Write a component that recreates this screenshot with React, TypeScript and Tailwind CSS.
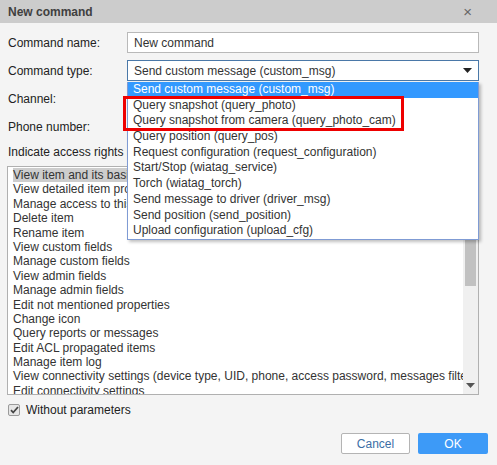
import React from "react";

const rights = [
  "View item and its basic properties",
  "View detailed item properties",
  "Manage access to this item",
  "Delete item",
  "Rename item",
  "View custom fields",
  "Manage custom fields",
  "View admin fields",
  "Manage admin fields",
  "Edit not mentioned properties",
  "Change icon",
  "Query reports or messages",
  "Edit ACL propagated items",
  "Manage item log",
  "View connectivity settings (device type, UID, phone, access password, messages filter)",
  "Edit connectivity settings",
];

const options = [
  "Send custom message (custom_msg)",
  "Query snapshot (query_photo)",
  "Query snapshot from camera (query_photo_cam)",
  "Query position (query_pos)",
  "Request configuration (request_configuration)",
  "Start/Stop (wiatag_service)",
  "Torch (wiatag_torch)",
  "Send message to driver (driver_msg)",
  "Send position (send_position)",
  "Upload configuration (upload_cfg)",
];

export default function App() {
  return (
    <div
      className="relative w-[497px] h-[465px] bg-[#f4f4f4] text-[12px] text-[#333] overflow-hidden"
      style={{ fontFamily: '"Liberation Sans", Arial, sans-serif' }}
    >
      {/* header */}
      <div className="h-[23px] bg-[#cccccc] flex items-center justify-between pl-[8px] pr-[25px]">
        <span className="font-bold text-[#404040]">New command</span>
        <span className="text-[#666] text-[15px] leading-none">×</span>
      </div>

      <div className="flex flex-col px-[7px] pt-[9px]">
        <div className="flex items-center h-[21px]">
          <div className="w-[120px] pl-[1px] text-[#222]">Command name:</div>
          <div className="w-[352px] h-[21px] border border-[#b9b9b9] bg-white pl-[6px] flex items-center">
            New command
          </div>
        </div>
        <div className="flex items-center h-[21px] mt-[7px]">
          <div className="w-[120px] pl-[1px] text-[#222]">Command type:</div>
          <div className="w-[352px] h-[21px] border border-[#4a78a8] bg-white pl-[6px] pr-[6px] flex items-center justify-between">
            <span>Send custom message (custom_msg)</span>
            <svg width="9" height="5" viewBox="0 0 9 5">
              <path d="M0 0h9L4.5 5z" fill="#222" />
            </svg>
          </div>
        </div>
        <div className="flex items-center h-[21px] mt-[7px] pl-[1px] text-[#222]">Channel:</div>
        <div className="flex items-center h-[21px] mt-[7px] pl-[1px] text-[#222]">Phone number:</div>
        <div className="flex items-center h-[16px] mt-[7px] pl-[1px] text-[#222]">
          Indicate access rights required to execute the command
        </div>

        {/* list */}
        <div className="mt-[6px] w-[472px] h-[229px] border border-[#b0b0b0] bg-white flex">
          <div className="flex-1 overflow-hidden pl-[5px] pt-[1px]">
            {rights.map((r, i) => (
              <div
                key={r}
                className={`h-[14.4px] leading-[14.4px] whitespace-nowrap ${i === 0 ? "bg-[#cdcdcd]" : ""}`}
              >
                {r}
              </div>
            ))}
          </div>
          <div className="w-[15px] bg-[#f0f0f0] flex flex-col items-center">
            <div className="h-[14px]" />
            <div className="w-[11px] h-[103px] bg-[#c1c1c1] mt-[2px]" />
            <div className="flex-1" />
            <svg width="9" height="5" viewBox="0 0 9 5" className="mb-[6px]">
              <path d="M0 0h9L4.5 5z" fill="#555" />
            </svg>
          </div>
        </div>

        <div className="flex items-center mt-[9px] h-[12px]">
          <div className="w-[12px] h-[12px] ml-[1px] border border-[#9a9a9a] rounded-[2px] bg-[#e6e6e6] flex items-center justify-center">
            <svg width="9" height="8" viewBox="0 0 9 8">
              <path d="M1 4.2l2.2 2.3L8 1" stroke="#444" strokeWidth="1.8" fill="none" />
            </svg>
          </div>
          <span className="ml-[6px] text-[#222]">Without parameters</span>
        </div>

        <div className="flex justify-end gap-[8px] mt-[17px] pr-[2px]">
          <div className="w-[69px] h-[21px] border border-[#b4b4b4] rounded-[2px] bg-white text-[#3b6ea5] flex items-center justify-center">
            Cancel
          </div>
          <div className="w-[70px] h-[21px] rounded-[2px] bg-[#3d9af7] text-white flex items-center justify-center">
            OK
          </div>
        </div>
      </div>

      {/* dropdown */}
      <div className="absolute left-[127px] top-[82px] w-[352px] bg-white border border-[#7f9bd4] border-t-0 shadow-[2px_2px_3px_rgba(0,0,0,0.25)]">
        {options.map((o, i) => (
          <div
            key={o}
            className={`h-[15.7px] leading-[15.7px] pl-[5px] whitespace-nowrap ${
              i === 0 ? "bg-[#3399ff] text-white" : "text-[#333]"
            }`}
          >
            {o}
          </div>
        ))}
      </div>

      {/* red highlight */}
      <div className="absolute left-[123px] top-[96px] w-[281px] h-[35px] border-[3px] border-[#ee0000]" />
    </div>
  );
}
